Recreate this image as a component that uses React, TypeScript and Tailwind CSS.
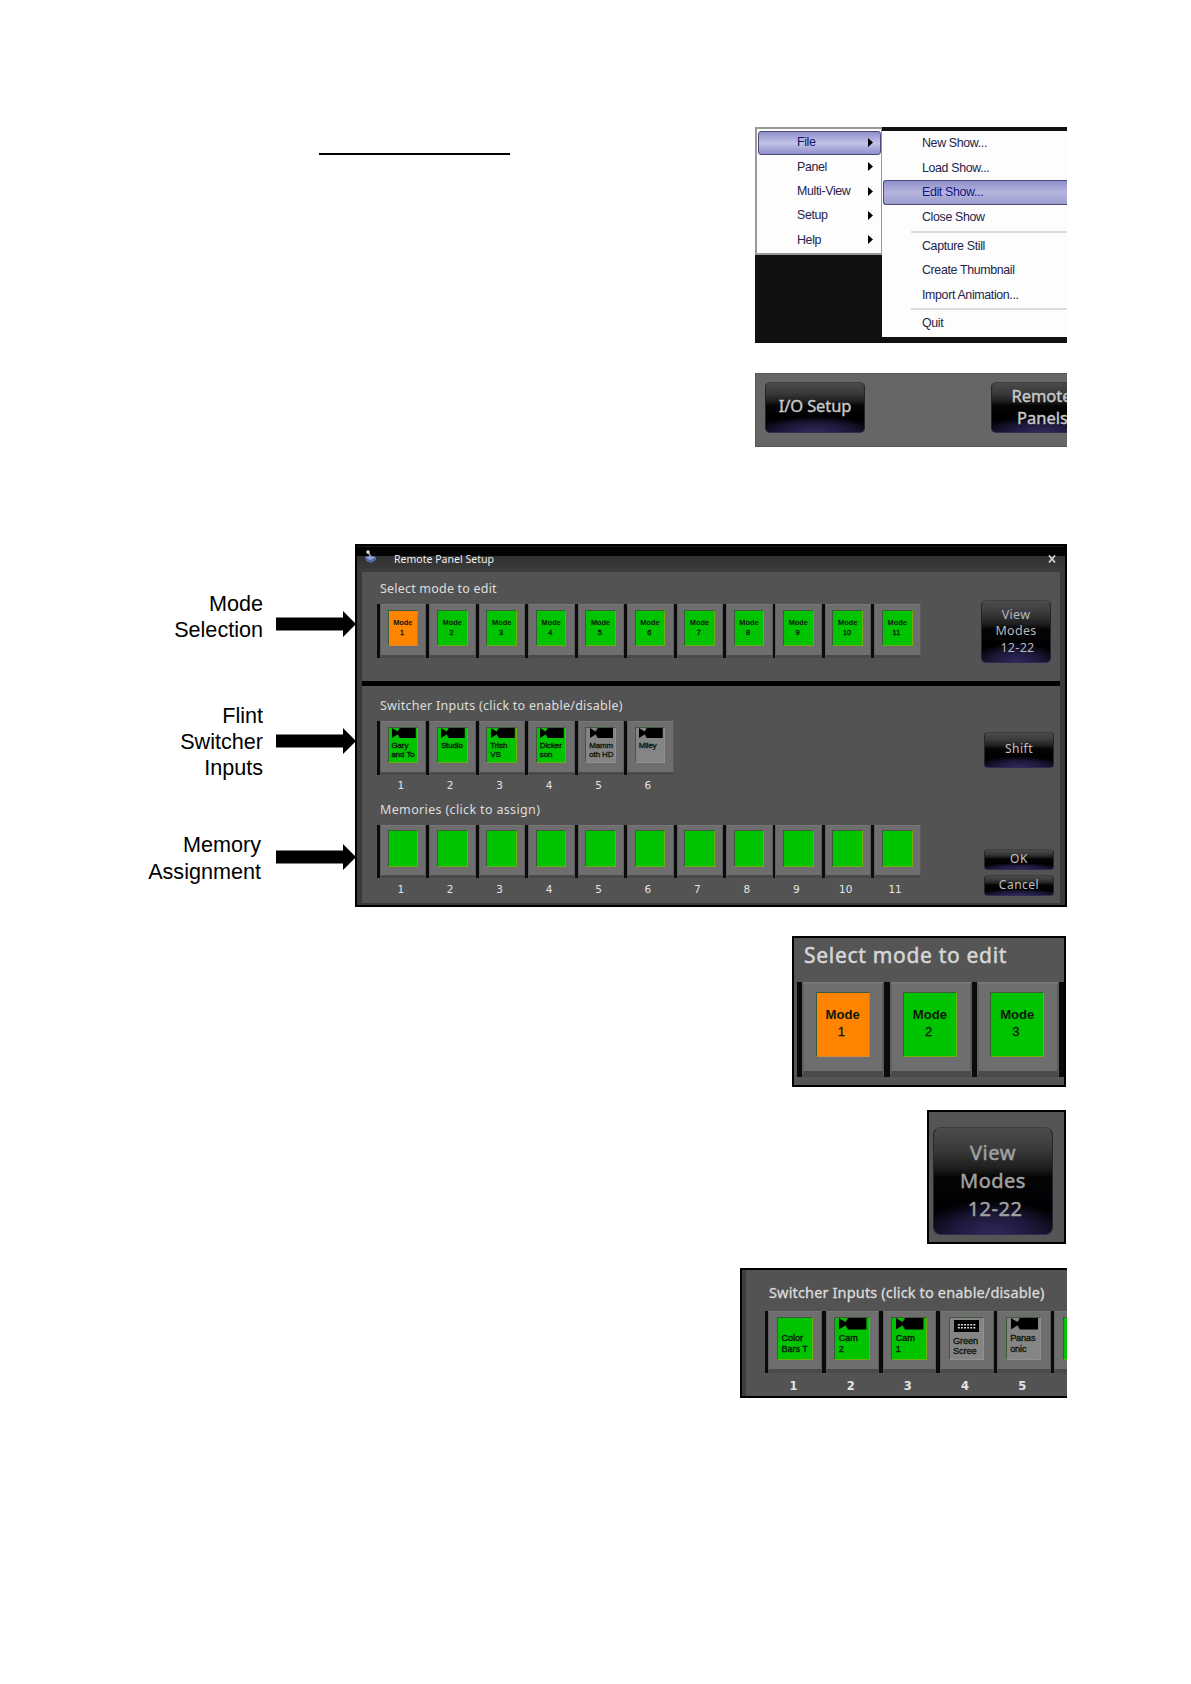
import React from "react";

type Tone = "orange" | "green" | "gray";
type Icon = "camera" | "keyer" | "none";
type KeyData = { tone: Tone; icon?: Icon; lines?: string[]; centered?: boolean };

const tones: Record<Tone, string> = {
  orange: "bg-[#ff8400] border-r-[#c8783a] border-b-[#d88a30]",
  green: "bg-[#00c400] border-r-[#6fae12] border-b-[#6fae12]",
  gray: "bg-[#858585] border-r-[#909090] border-b-[#909090]",
};

function CameraIcon() {
  return (
    <svg viewBox="0 0 26 10" className="ml-[0.07em] block h-[0.2em] w-[0.48em]" preserveAspectRatio="none">
      <path d="M0 0 L6 3.5 L8 1 V0 H26 V10 H8 V9 L6 6.5 L0 10 Z" fill="#000" />
      <path d="M8 0.5 L6 3.5 M6 6.5 L8 9.5" stroke="#555" strokeWidth="0.8" />
    </svg>
  );
}

function KeyerIcon() {
  return (
    <svg viewBox="0 0 26 12" className="mx-auto mt-[0.02em] block h-[0.22em] w-[0.44em]" preserveAspectRatio="none">
      <rect width="26" height="12" fill="#000" />
      <path d="M4 4.5 H22 M4 7.5 H22" stroke="#ddd" strokeWidth="1.4" strokeDasharray="2 1.2" />
    </svg>
  );
}

/* One panel key; every measure is in em so a row scales with its font size. */
function PanelKey({ tone, icon = "none", lines = [], centered = false }: KeyData) {
  return (
    <div className="flex h-[1.085em] w-[1em] shrink-0 bg-[#0a0a0a] pl-[0.06em]">
      <div className="flex w-full justify-center border-x-[0.025em] border-b-[0.075em] border-t-[0.025em] border-b-[#4a4a4a] border-l-[#5f5f5f] border-r-[#5b5b5b] border-t-[#777] bg-[#6e6e6e] pr-[0.015em] pt-[0.095em]">
        <div className={`h-[0.74em] w-[0.62em] overflow-hidden border-[0.022em] border-l-[#3c5a3c] border-t-[#3f5a3f] ${tones[tone]}`}>
          {icon === "camera" && <CameraIcon />}
          {icon === "keyer" && <KeyerIcon />}
          {icon === "none" && !centered && <div className="h-[0.2em]" />}
          <div className={centered ? "pt-[0.14em] text-center" : "pl-[0.06em] pt-[0.06em]"}>
            {lines.map((line, i) => (
              <div
                key={line}
                className={`whitespace-nowrap font-['Liberation_Sans'] text-[#0c1a0c] ${
                  centered
                    ? i === 0
                      ? "text-[0.15em] font-bold leading-[1.36]"
                      : "pr-[0.2em] text-[0.15em] leading-[1.36] [-webkit-text-stroke:0.3px_#0c1a0c]"
                    : "text-[0.16em] leading-[1.16] tracking-[-0.01em] [-webkit-text-stroke:0.35px_#0c1a0c]"
                }`}
              >
                {line}
              </div>
            ))}
          </div>
        </div>
      </div>
    </div>
  );
}

function KeyRow({ items, className }: { items: KeyData[]; className: string }) {
  return (
    <div className={`flex leading-none ${className}`}>
      {items.map((item, i) => (
        <PanelKey key={i} {...item} />
      ))}
    </div>
  );
}

function Numbers({ count, className, cell }: { count: number; className: string; cell: string }) {
  return (
    <div className={`flex font-['DejaVu_Sans'] text-[#e4e4e4] ${className}`}>
      {Array.from({ length: count }, (_, i) => (
        <span key={i} className={`shrink-0 text-center ${cell}`}>
          {i + 1}
        </span>
      ))}
    </div>
  );
}

function GlossButton({ className, children }: { className: string; children: React.ReactNode }) {
  return (
    <div
      className={`flex shrink-0 flex-col items-center justify-center whitespace-nowrap border border-t-[#3d3d48] border-x-[#25242e] border-b-[#302b52] bg-[radial-gradient(ellipse_60%_32%_at_50%_100%,#30295c_0%,#1d193b_55%,transparent_100%),linear-gradient(to_bottom,#4b4b4c_0%,#3a3a3b_20%,#1e1e1f_38%,#050506_46%,#000002_75%,#0c0a1c_100%)] ${className}`}
    >
      {children}
    </div>
  );
}

function Arrow({ className }: { className: string }) {
  return (
    <svg viewBox="0 0 80 26" className={`block h-[26px] w-[80px] shrink-0 ${className}`}>
      <path d="M0 6.5 H67 V0 L80 13 L67 26 V19.5 H0 Z" fill="#000" />
    </svg>
  );
}

function MenuItem({ label, active = false }: { label: string; active?: boolean }) {
  return (
    <div
      className={`flex h-[24.3px] items-center justify-between border pl-[38px] pr-[7px] ${
        active
          ? "rounded-[3px] border-[#4a4a78] bg-gradient-to-b from-[#8f8fca] via-[#c3c3e8] to-[#9090cb] text-[#141460]"
          : "border-transparent"
      }`}
    >
      <span>{label}</span>
      <svg viewBox="0 0 5 9" className="h-[9px] w-[5px]">
        <path d="M0 0 L5 4.5 L0 9 Z" fill="#000" />
      </svg>
    </div>
  );
}

function SubItem({ label, active = false }: { label: string; active?: boolean }) {
  return (
    <div
      className={`ml-px flex h-[24.4px] items-center whitespace-nowrap border-y border-l pl-[38px] ${
        active
          ? "rounded-l-[3px] border-[#4a4a78] bg-gradient-to-b from-[#8f8fca] via-[#b5b5de] to-[#9c9cd0] text-[#141480]"
          : "border-transparent"
      }`}
    >
      {label}
    </div>
  );
}

function MenuFigure() {
  return (
    <div className="flex h-[216px] w-[312px] overflow-hidden bg-[#111] font-['Liberation_Sans'] text-[12.4px] tracking-[-0.35px] text-[#23234a]">
      <div className="h-[128px] w-[127px] shrink-0 border-2 border-r border-[#999] border-r-[#999] bg-[#fdfdfe] pl-px pt-[1.5px]">
        <MenuItem label="File" active />
        <MenuItem label="Panel" />
        <MenuItem label="Multi-View" />
        <MenuItem label="Setup" />
        <MenuItem label="Help" />
      </div>
      <div className="mt-[4px] h-[206px] flex-1 bg-[#fdfdfe] pt-[0.5px]">
        <SubItem label="New Show..." />
        <SubItem label="Load Show..." />
        <SubItem label="Edit Show..." active />
        <SubItem label="Close Show" />
        <div className="ml-[29px] mt-[2px] h-[2px] bg-[#dcdcdc]" />
        <div className="h-px" />
        <SubItem label="Capture Still" />
        <SubItem label="Create Thumbnail" />
        <SubItem label="Import Animation..." />
        <div className="ml-[29px] mt-[1px] h-[2px] bg-[#dcdcdc]" />
        <div className="h-px" />
        <SubItem label="Quit" />
      </div>
    </div>
  );
}

function SetupFigure() {
  return (
    <div className="mt-[30px] flex h-[74px] w-[312px] overflow-hidden border border-r-0 border-[#555] bg-[#666] pl-[9px] pt-[8px] font-['Noto_Sans'] text-[16.5px] text-[#c8c8c8] [-webkit-text-stroke:0.4px_#c8c8c8]">
      <GlossButton className="h-[51px] w-[100px] rounded-[5px]">
        <span className="-mt-[3px] tracking-[-0.1px]">I/O Setup</span>
      </GlossButton>
      <GlossButton className="ml-[126px] h-[51px] w-[101px] rounded-[5px] leading-[22.5px]">
        <span className="-mt-px">Remote</span>
        <span className="pl-[2px]">Panels</span>
      </GlossButton>
    </div>
  );
}

const modeKeys: KeyData[] = Array.from({ length: 11 }, (_, i) => ({
  tone: i === 0 ? "orange" : "green",
  lines: ["Mode", String(i + 1)],
  centered: true,
}));

const inputKeys: KeyData[] = [
  { tone: "green", icon: "camera", lines: ["Gary", "and To"] },
  { tone: "green", icon: "camera", lines: ["Studio"] },
  { tone: "green", icon: "camera", lines: ["Trish", "VS"] },
  { tone: "green", icon: "camera", lines: ["Dicker", "son"] },
  { tone: "gray", icon: "camera", lines: ["Mamm", "oth HD"] },
  { tone: "gray", icon: "camera", lines: ["Miley"] },
];

const memoryKeys: KeyData[] = Array.from({ length: 11 }, () => ({ tone: "green" }));

const sampleKeys: KeyData[] = [
  { tone: "green", lines: ["Color", "Bars T"] },
  { tone: "green", icon: "camera", lines: ["Cam", "2"] },
  { tone: "green", icon: "camera", lines: ["Cam", "1"] },
  { tone: "gray", icon: "keyer", lines: ["Green", "Scree"] },
  { tone: "gray", icon: "camera", lines: ["Panas", "onic"] },
  { tone: "green" },
];

function RemotePanel() {
  return (
    <div className="flex h-[363px] w-[712px] flex-col overflow-hidden border-2 border-black bg-[#3a3a3a] font-['Noto_Sans'] text-[#dedede]">
      <div className="h-[10px] shrink-0 border-t border-[#1c1c1c] bg-[#020203]" />
      <div className="flex h-[16px] shrink-0 items-start justify-between bg-gradient-to-b from-[#303031] to-[#3d3d3d] pl-[7px] pr-[9px] text-[10.5px] leading-[8px]">
        <div className="flex">
          <svg viewBox="0 0 14 14" className="-mt-[6px] h-[14px] w-[14px]">
            <path d="M4 2 L7 7" stroke="#999" strokeWidth="1.5" />
            <circle cx="4" cy="2" r="1.8" fill="#ddd" />
            <path d="M1 7 L7 8 L12 7 L12 10 L7 13 L2 11 Z" fill="#5268a8" />
            <path d="M1 7 L6 10 L12 7 L7 6 Z" fill="#8fa5df" />
          </svg>
          <span className="-mt-[1.5px] ml-[16px] tracking-[0.02px] text-[#f0f0f0]">Remote Panel Setup</span>
        </div>
        <svg viewBox="0 0 8 8" className="-mt-px h-[8px] w-[8px]">
          <path d="M1 0.5 L7 7.5 M7 0.5 L1 7.5" stroke="#cfcfcf" strokeWidth="1.8" />
        </svg>
      </div>
      <div className="mx-[5px] flex h-[331px] shrink-0 flex-col bg-[#535353]">
        <div className="flex h-[109px] shrink-0 justify-between pl-[15px] pr-[9px]">
          <div>
            <div className="mt-[9px] pl-[3px] text-[12.5px] leading-[16px] tracking-[0.2px]">Select mode to edit</div>
            <KeyRow items={modeKeys} className="mt-[7px] text-[49.45px]" />
          </div>
          <GlossButton className="mt-[28px] h-[63px] w-[70px] rounded-[5px] text-[12.5px] leading-[16.4px] tracking-[0.3px] text-[#b8b8b8]">
            <span>View</span>
            <span>Modes</span>
            <span className="pl-[3px]">12-22</span>
          </GlossButton>
        </div>
        <div className="h-[5px] shrink-0 bg-black" />
        <div className="flex flex-1 justify-between pl-[15px] pr-[6px]">
          <div>
            <div className="mt-[12px] pl-[3px] text-[12.5px] leading-[16px] tracking-[0.26px]">
              Switcher Inputs (click to enable/disable)
            </div>
            <KeyRow items={inputKeys} className="mt-[7px] text-[49.45px]" />
            <Numbers count={6} className="-ml-px text-[10.5px] leading-[21px]" cell="w-[49.45px]" />
            <div className="mt-[6px] pl-[3px] text-[12.5px] leading-[16px] tracking-[0.35px]">Memories (click to assign)</div>
            <KeyRow items={memoryKeys} className="mt-[7px] text-[49.45px]" />
            <Numbers count={11} className="-ml-px text-[10.5px] leading-[23px]" cell="w-[49.45px]" />
          </div>
          <div className="flex flex-col pt-[46px] text-[12px] leading-[12px] tracking-[0.5px] text-[#c0c0c0]">
            <GlossButton className="h-[36px] w-[70px] rounded-[4px] pb-[2px]">Shift</GlossButton>
            <GlossButton className="mt-[81px] h-[21px] w-[70px] rounded-[4px] pb-[2px]">OK</GlossButton>
            <GlossButton className="mt-[5px] h-[21px] w-[70px] rounded-[4px] pb-[2px]">Cancel</GlossButton>
          </div>
        </div>
      </div>
    </div>
  );
}

function Callouts() {
  return (
    <div className="flex w-[226px] flex-col font-['Liberation_Sans'] text-[21.6px] leading-[26.3px] text-black">
      <div className="mt-[46px] flex justify-end">
        <div className="mt-[1px] text-right">
          Mode
          <br />
          Selection
        </div>
        <Arrow className="ml-[13px] mt-[21px]" />
      </div>
      <div className="mt-[59px] flex justify-end">
        <div className="text-right">
          Flint
          <br />
          Switcher
          <br />
          Inputs
        </div>
        <Arrow className="ml-[13px] mt-[25px]" />
      </div>
      <div className="mt-[51px] flex justify-end">
        <div className="text-right">
          Memory
          <br />
          Assignment
        </div>
        <Arrow className="ml-[15px] mt-[12px]" />
      </div>
    </div>
  );
}

export default function App() {
  return (
    <main className="flex h-[1684px] w-[1191px] flex-col overflow-hidden bg-white pr-[124px] pt-[127px]">
      <section className="flex justify-between pl-[319px]">
        <div className="mt-[26px] h-[2px] w-[191px] bg-black" />
        <div>
          <MenuFigure />
          <SetupFigure />
        </div>
      </section>

      <section className="mt-[97px] flex justify-end">
        <div className="-mr-px">
          <Callouts />
        </div>
        <RemotePanel />
      </section>

      <section className="mr-px mt-[29px] flex h-[151px] w-[274px] flex-col self-end overflow-hidden border-2 border-black bg-[#555] pl-[3px] font-['Noto_Sans']">
        <div className="mt-[2px] whitespace-nowrap pl-[7px] text-[21px] leading-[30px] tracking-[0.7px] text-[#d6d6d6] [-webkit-text-stroke:0.5px_#d6d6d6]">
          Select mode to edit
        </div>
        <KeyRow items={[...modeKeys.slice(0, 3), { tone: "green" }]} className="mt-[12px] text-[87.3px]" />
      </section>

      <section className="mr-px mt-[23px] h-[134px] w-[139px] self-end border-2 border-black bg-[#555] pl-[4px] pt-[15px] font-['Noto_Sans']">
        <GlossButton className="h-[108px] w-[120px] rounded-[8px] text-[20px] leading-[28px] tracking-[0.5px] text-[#a0a0a0] [-webkit-text-stroke:0.5px_#a0a0a0]">
          <span>View</span>
          <span>Modes</span>
          <span className="pl-[4px]">12-22</span>
        </GlossButton>
      </section>

      <section className="mt-[24px] flex h-[130px] w-[327px] self-end overflow-hidden border-2 border-r-0 border-black bg-[#535353] font-['Noto_Sans']">
        <div className="w-[4px] shrink-0 bg-[#3e3e3e]" />
        <div className="pl-[19px]">
          <div className="mt-[12px] whitespace-nowrap pl-[4px] text-[14.5px] leading-[20px] tracking-[0.15px] text-[#dcdcdc] [-webkit-text-stroke:0.3px_#dcdcdc]">
            Switcher Inputs (click to enable/disable)
          </div>
          <KeyRow items={sampleKeys} className="mt-[9px] text-[57.15px]" />
          <Numbers count={5} className="text-[11.5px] font-bold leading-[26px]" cell="w-[57.15px]" />
        </div>
      </section>
    </main>
  );
}
